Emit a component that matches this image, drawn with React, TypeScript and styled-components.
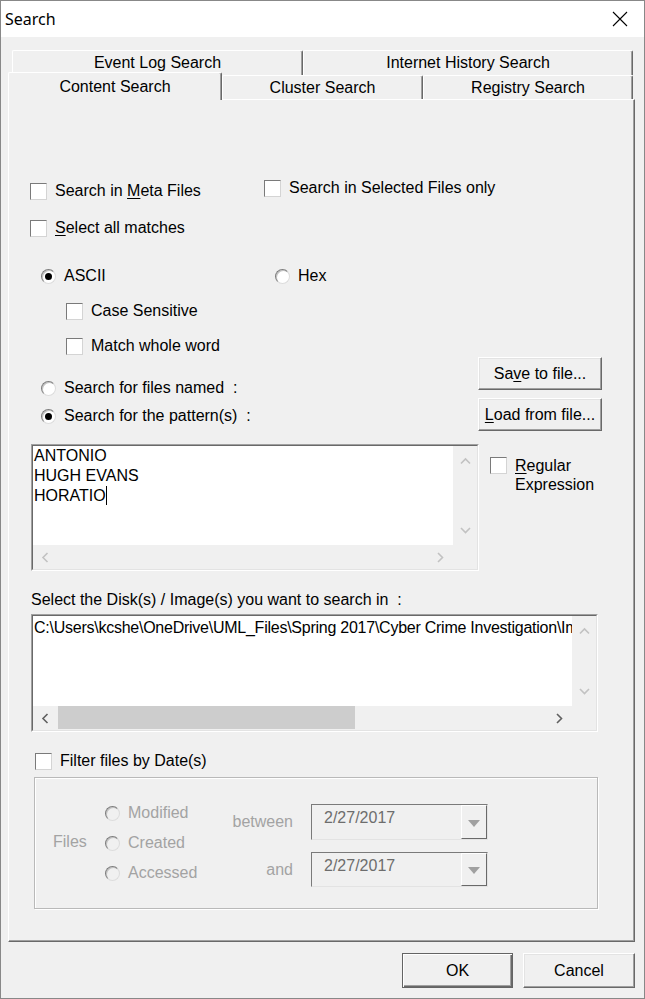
import React from 'react';
import styled, { createGlobalStyle } from 'styled-components';

const GlobalStyle = createGlobalStyle`
  html, body {
    margin: 0;
    padding: 0;
    background: #ffffff;
  }
  body {
    font-family: "Liberation Sans", Arial, sans-serif;
    font-size: 16px;
    color: #000000;
  }
  * {
    box-sizing: border-box;
  }
`;

const Window = styled.div`
  width: 645px;
  height: 999px;
  border: 1px solid #888888;
  background: #f0f0f0;
  display: flex;
  flex-direction: column;
`;

const TitleBar = styled.div`
  height: 36px;
  flex: none;
  background: #ffffff;
  display: flex;
  align-items: center;
  justify-content: space-between;
  padding: 0 16px 0 4px;
`;

const TitleText = styled.span`
  font-family: "Noto Sans", "Liberation Sans", sans-serif;
  font-size: 16px;
  line-height: 20px;
`;

const Body = styled.div`
  flex: 1;
  display: flex;
  flex-direction: column;
  padding: 13px 9px 0 7px;
`;

const TabRow = styled.div<{ $back?: boolean }>`
  display: flex;
  align-items: flex-end;
  height: ${p => (p.$back ? 25 : 24)}px;
  margin-left: ${p => (p.$back ? 4 : 0)}px;
`;

const Tab = styled.div<{ $w: number; $active?: boolean }>`
  width: ${p => p.$w}px;
  height: ${p => (p.$active ? '28px' : '100%')};
  margin-bottom: ${p => (p.$active ? -1 : 0)}px;
  position: ${p => (p.$active ? 'relative' : 'static')};
  z-index: ${p => (p.$active ? 2 : 'auto')};
  background: #f0f0f0;
  border-top: 1px solid #ffffff;
  border-left: 1px solid #ffffff;
  border-right: 1px solid #696969;
  box-shadow: inset -1px 0 #a0a0a0;
  border-radius: 2px 2px 0 0;
  display: flex;
  align-items: center;
  justify-content: center;
  line-height: 18px;
  white-space: nowrap;
`;

const Panel = styled.div`
  height: 843px;
  flex: none;
  display: flex;
  flex-direction: column;
  align-items: flex-start;
  padding: 79px 0 0 21px;
  border-top: 1px solid #ffffff;
  border-left: 1px solid #ffffff;
  border-right: 1px solid #696969;
  border-bottom: 1px solid #696969;
  box-shadow: inset -1px -1px #a0a0a0;
`;

const Row = styled.div<{ $top?: number; $left?: number }>`
  display: flex;
  align-items: flex-start;
  margin-top: ${p => p.$top ?? 0}px;
  margin-left: ${p => p.$left ?? 0}px;
`;

const CheckItem = styled.div<{ $width?: number; $top?: number; $left?: number; $multi?: boolean }>`
  display: flex;
  align-items: ${p => (p.$multi ? 'flex-start' : 'center')};
  gap: 8px;
  height: ${p => (p.$multi ? 'auto' : '18px')};
  width: ${p => (p.$width ? `${p.$width}px` : 'auto')};
  margin-top: ${p => p.$top ?? 0}px;
  margin-left: ${p => p.$left ?? 0}px;
  line-height: 18px;
  white-space: nowrap;
`;

const CheckBox = styled.span`
  width: 17px;
  height: 17px;
  flex: none;
  background: #ffffff;
  border: 1px solid;
  border-color: #7a7a7a #d4d4d4 #d4d4d4 #7a7a7a;
`;

const TwoLineText = styled.span`
  line-height: 19px;
  margin-top: -1px;
`;

const RadioItem = styled.div<{ $width?: number; $disabled?: boolean }>`
  display: flex;
  align-items: center;
  gap: 8px;
  height: 18px;
  width: ${p => (p.$width ? `${p.$width}px` : 'auto')};
  line-height: 18px;
  white-space: nowrap;
  color: ${p => (p.$disabled ? '#a3a3a3' : '#000000')};
`;

const RadioCircle = styled.span<{ $checked?: boolean; $disabled?: boolean }>`
  width: 15px;
  height: 15px;
  flex: none;
  border-radius: 50%;
  background: ${p => (p.$disabled ? '#f0f0f0' : '#ffffff')};
  border: 1px solid;
  border-color: #7d7d7d #dcdcdc #dcdcdc #7d7d7d;
  box-shadow: inset 1px 1px #c4c4c4;
  display: flex;
  align-items: center;
  justify-content: center;

  &::after {
    content: '';
    display: ${p => (p.$checked ? 'block' : 'none')};
    width: 7px;
    height: 7px;
    border-radius: 50%;
    background: #000000;
  }
`;

const Key = styled.span`
  text-decoration: underline;
  text-underline-offset: 2px;
`;

const MiddleBlock = styled.div`
  display: flex;
  margin-top: 2px;
`;

const RadioColumn = styled.div<{ $width: number; $top: number; $gap: number; $left?: number }>`
  width: ${p => p.$width}px;
  padding-top: ${p => p.$top}px;
  padding-left: ${p => p.$left ?? 0}px;
  display: flex;
  flex-direction: column;
  gap: ${p => p.$gap}px;
`;

const ButtonColumn = styled.div`
  display: flex;
  flex-direction: column;
  gap: 8px;
`;

const Button = styled.div<{ $w: number; $h: number; $default?: boolean }>`
  width: ${p => p.$w}px;
  height: ${p => p.$h}px;
  display: flex;
  align-items: center;
  justify-content: center;
  background: #f0f0f0;
  border: 1px solid;
  border-color: ${p => (p.$default ? '#646464' : '#ffffff #696969 #696969 #ffffff')};
  box-shadow: ${p =>
    p.$default
      ? 'inset 1px 1px #ffffff, inset -1px -1px #696969, inset -2px -2px #a0a0a0'
      : 'inset -1px -1px #a0a0a0, inset 1px 1px #e3e3e3'};
  line-height: 18px;
  white-space: nowrap;
`;

const PatternRow = styled.div`
  display: flex;
  align-items: flex-start;
  gap: 11px;
  margin-top: 13px;
  margin-left: 1px;
`;

const Frame = styled.div<{ $w: number; $h: number }>`
  width: ${p => p.$w}px;
  height: ${p => p.$h}px;
  border: 1px solid;
  border-color: #a0a0a0 #ffffff #ffffff #a0a0a0;
  flex: none;
`;

const ScrollGrid = styled.div`
  width: 100%;
  height: 100%;
  display: grid;
  grid-template-columns: 1fr 24px;
  grid-template-rows: 1fr 24px;
  border: 1px solid;
  border-color: #696969 #e3e3e3 #e3e3e3 #696969;
  background: #f0f0f0;
`;

const TextArea = styled.div<{ $padTop: number; $tight?: boolean }>`
  background: #ffffff;
  padding: ${p => p.$padTop}px 0 0 1px;
  line-height: 20px;
  letter-spacing: ${p => (p.$tight ? '-0.25px' : 'normal')};
  overflow: hidden;
  white-space: nowrap;
`;

const Caret = styled.span`
  display: inline-block;
  width: 1px;
  height: 19px;
  background: #000000;
  vertical-align: -4px;
`;

const VScroll = styled.div`
  display: flex;
  flex-direction: column;
  justify-content: space-between;
`;

const HScroll = styled.div`
  display: flex;
  align-items: stretch;
`;

const ArrowButton = styled.div<{ $vertical?: boolean }>`
  width: ${p => (p.$vertical ? '100%' : '25px')};
  height: ${p => (p.$vertical ? '30px' : '100%')};
  flex: none;
  display: flex;
  align-items: center;
  justify-content: center;
`;

const Thumb = styled.div<{ $w: number }>`
  width: ${p => p.$w}px;
  background: #cdcdcd;
  margin: 0 0 1px;
`;

const Spacer = styled.div`
  flex: 1;
`;

const Corner = styled.div`
  background: #f0f0f0;
`;

const SectionLabel = styled.div<{ $top: number }>`
  margin-top: ${p => p.$top}px;
  margin-left: 1px;
  line-height: 18px;
  white-space: nowrap;
`;

const ListFrame = styled(Frame)`
  margin-top: 5px;
  margin-left: 1px;
`;

const GroupBox = styled.div`
  width: 564px;
  height: 132px;
  margin-top: 7px;
  margin-left: 4px;
  border: 1px solid #b9b9b9;
  box-shadow: inset 1px 1px #ffffff, 1px 1px #ffffff;
  padding: 26px 0 0 18px;
  display: flex;
  align-items: flex-start;
  color: #a3a3a3;
`;

const FilesLabel = styled.div`
  width: 52px;
  margin-top: 29px;
  line-height: 18px;
`;

const DateGrid = styled.div`
  display: grid;
  grid-template-columns: 88px 177px;
  grid-template-rows: 36px 35px;
  column-gap: 18px;
  row-gap: 12px;
`;

const DateLabel = styled.div`
  align-self: center;
  text-align: right;
  line-height: 18px;
`;

const Combo = styled.div`
  display: flex;
  border: 1px solid;
  border-color: #7a7a7a #e3e3e3 #e3e3e3 #7a7a7a;
`;

const ComboText = styled.div`
  flex: 1;
  padding: 4px 0 0 12px;
  line-height: 18px;
  color: #6d6d6d;
`;

const ComboButton = styled.div`
  width: 26px;
  flex: none;
  display: flex;
  align-items: center;
  justify-content: center;
  padding-top: 2px;
  background: #f0f0f0;
  border: 1px solid;
  border-color: #ffffff #696969 #696969 #ffffff;

  &::after {
    content: '';
    border-left: 6px solid transparent;
    border-right: 6px solid transparent;
    border-top: 7px solid #a0a0a0;
  }
`;

const Footer = styled.div`
  display: flex;
  justify-content: flex-end;
  gap: 10px;
  padding-top: 11px;
`;

type Dir = 'up' | 'down' | 'left' | 'right';

const Chevron = ({ dir, color }: { dir: Dir; color: string }) => {
  const paths: Record<Dir, string> = {
    up: 'M1 6.5 L5.5 2 L10 6.5',
    down: 'M1 2 L5.5 6.5 L10 2',
    left: 'M6.5 1 L2 5.5 L6.5 10',
    right: 'M2 1 L6.5 5.5 L2 10',
  };
  const vertical = dir === 'up' || dir === 'down';
  return (
    <svg
      width={vertical ? 11 : 9}
      height={vertical ? 9 : 11}
      viewBox={vertical ? '0 0 11 9' : '0 0 9 11'}
    >
      <path d={paths[dir]} fill="none" stroke={color} strokeWidth={1.6} />
    </svg>
  );
};

const CloseIcon = () => (
  <svg width="16" height="16" viewBox="0 0 16 16">
    <path d="M1 1 L15 15 M15 1 L1 15" stroke="#000000" strokeWidth={1.1} fill="none" />
  </svg>
);

const Check = ({ children, ...rest }: React.ComponentProps<typeof CheckItem>) => (
  <CheckItem {...rest}>
    <CheckBox />
    <span>{children}</span>
  </CheckItem>
);

const Radio = ({
  children,
  checked,
  disabled,
  width,
}: {
  children: React.ReactNode;
  checked?: boolean;
  disabled?: boolean;
  width?: number;
}) => (
  <RadioItem $width={width} $disabled={disabled}>
    <RadioCircle $checked={checked} $disabled={disabled} />
    <span>{children}</span>
  </RadioItem>
);

const DISABLED_ARROW = '#c2c2c2';
const ENABLED_ARROW = '#606060';

const App = () => {
  return (
    <>
      <GlobalStyle />
      <Window>
        <TitleBar>
          <TitleText>Search</TitleText>
          <CloseIcon />
        </TitleBar>
        <Body>
          <TabRow $back>
            <Tab $w={291}>Event Log Search</Tab>
            <Tab $w={330}>Internet History Search</Tab>
          </TabRow>
          <TabRow>
            <Tab $w={214} $active>Content Search</Tab>
            <Tab $w={201}>Cluster Search</Tab>
            <Tab $w={210}>Registry Search</Tab>
          </TabRow>
          <Panel>
            <Row>
              <Check $width={234} $top={3}>
                Search in <Key>M</Key>eta Files
              </Check>
              <Check>Search in Selected Files only</Check>
            </Row>
            <Check $top={19}>
              <Key>S</Key>elect all matches
            </Check>
            <Row $top={30} $left={11}>
              <Radio width={234} checked>ASCII</Radio>
              <Radio>Hex</Radio>
            </Row>
            <Check $top={17} $left={36}>Case Sensitive</Check>
            <Check $top={17} $left={36}>Match whole word</Check>

            <MiddleBlock>
              <RadioColumn $width={448} $top={22} $gap={10} $left={11}>
                <Radio>Search for files named&nbsp; :</Radio>
                <Radio checked>Search for the pattern(s)&nbsp; :</Radio>
              </RadioColumn>
              <ButtonColumn>
                <Button $w={124} $h={33}>
                  Sa<Key>v</Key>e to file...
                </Button>
                <Button $w={124} $h={33}>
                  <Key>L</Key>oad from file...
                </Button>
              </ButtonColumn>
            </MiddleBlock>

            <PatternRow>
              <Frame $w={448} $h={127}>
                <ScrollGrid>
                  <TextArea $padTop={0}>
                    ANTONIO
                    <br />
                    HUGH EVANS
                    <br />
                    HORATIO
                    <Caret />
                  </TextArea>
                  <VScroll>
                    <ArrowButton $vertical>
                      <Chevron dir="up" color={DISABLED_ARROW} />
                    </ArrowButton>
                    <ArrowButton $vertical>
                      <Chevron dir="down" color={DISABLED_ARROW} />
                    </ArrowButton>
                  </VScroll>
                  <HScroll>
                    <ArrowButton>
                      <Chevron dir="left" color={DISABLED_ARROW} />
                    </ArrowButton>
                    <Spacer />
                    <ArrowButton>
                      <Chevron dir="right" color={DISABLED_ARROW} />
                    </ArrowButton>
                  </HScroll>
                  <Corner />
                </ScrollGrid>
              </Frame>
              <CheckItem $top={13} $multi>
                <CheckBox />
                <TwoLineText>
                  <Key>R</Key>egular
                  <br />
                  Expression
                </TwoLineText>
              </CheckItem>
            </PatternRow>

            <SectionLabel $top={20}>
              Select the Disk(s) / Image(s) you want to search in&nbsp; :
            </SectionLabel>
            <ListFrame $w={567} $h={118}>
              <ScrollGrid>
                <TextArea $padTop={2} $tight>
                  C:\Users\kcshe\OneDrive\UML_Files\Spring 2017\Cyber Crime Investigation\Images\
                </TextArea>
                <VScroll>
                  <ArrowButton $vertical>
                    <Chevron dir="up" color={DISABLED_ARROW} />
                  </ArrowButton>
                  <ArrowButton $vertical>
                    <Chevron dir="down" color={DISABLED_ARROW} />
                  </ArrowButton>
                </VScroll>
                <HScroll>
                  <ArrowButton>
                    <Chevron dir="left" color={ENABLED_ARROW} />
                  </ArrowButton>
                  <Thumb $w={297} />
                  <Spacer />
                  <ArrowButton>
                    <Chevron dir="right" color={ENABLED_ARROW} />
                  </ArrowButton>
                </HScroll>
                <Corner />
              </ScrollGrid>
            </ListFrame>

            <Check $top={20} $left={5}>Filter files by Date(s)</Check>
            <GroupBox>
              <FilesLabel>Files</FilesLabel>
              <RadioColumn $width={100} $top={0} $gap={12}>
                <Radio disabled>Modified</Radio>
                <Radio disabled>Created</Radio>
                <Radio disabled>Accessed</Radio>
              </RadioColumn>
              <DateGrid>
                <DateLabel>between</DateLabel>
                <Combo>
                  <ComboText>2/27/2017</ComboText>
                  <ComboButton />
                </Combo>
                <DateLabel>and</DateLabel>
                <Combo>
                  <ComboText>2/27/2017</ComboText>
                  <ComboButton />
                </Combo>
              </DateGrid>
            </GroupBox>
          </Panel>
          <Footer>
            <Button $w={111} $h={35} $default>OK</Button>
            <Button $w={112} $h={35}>Cancel</Button>
          </Footer>
        </Body>
      </Window>
    </>
  );
};

export default App;
